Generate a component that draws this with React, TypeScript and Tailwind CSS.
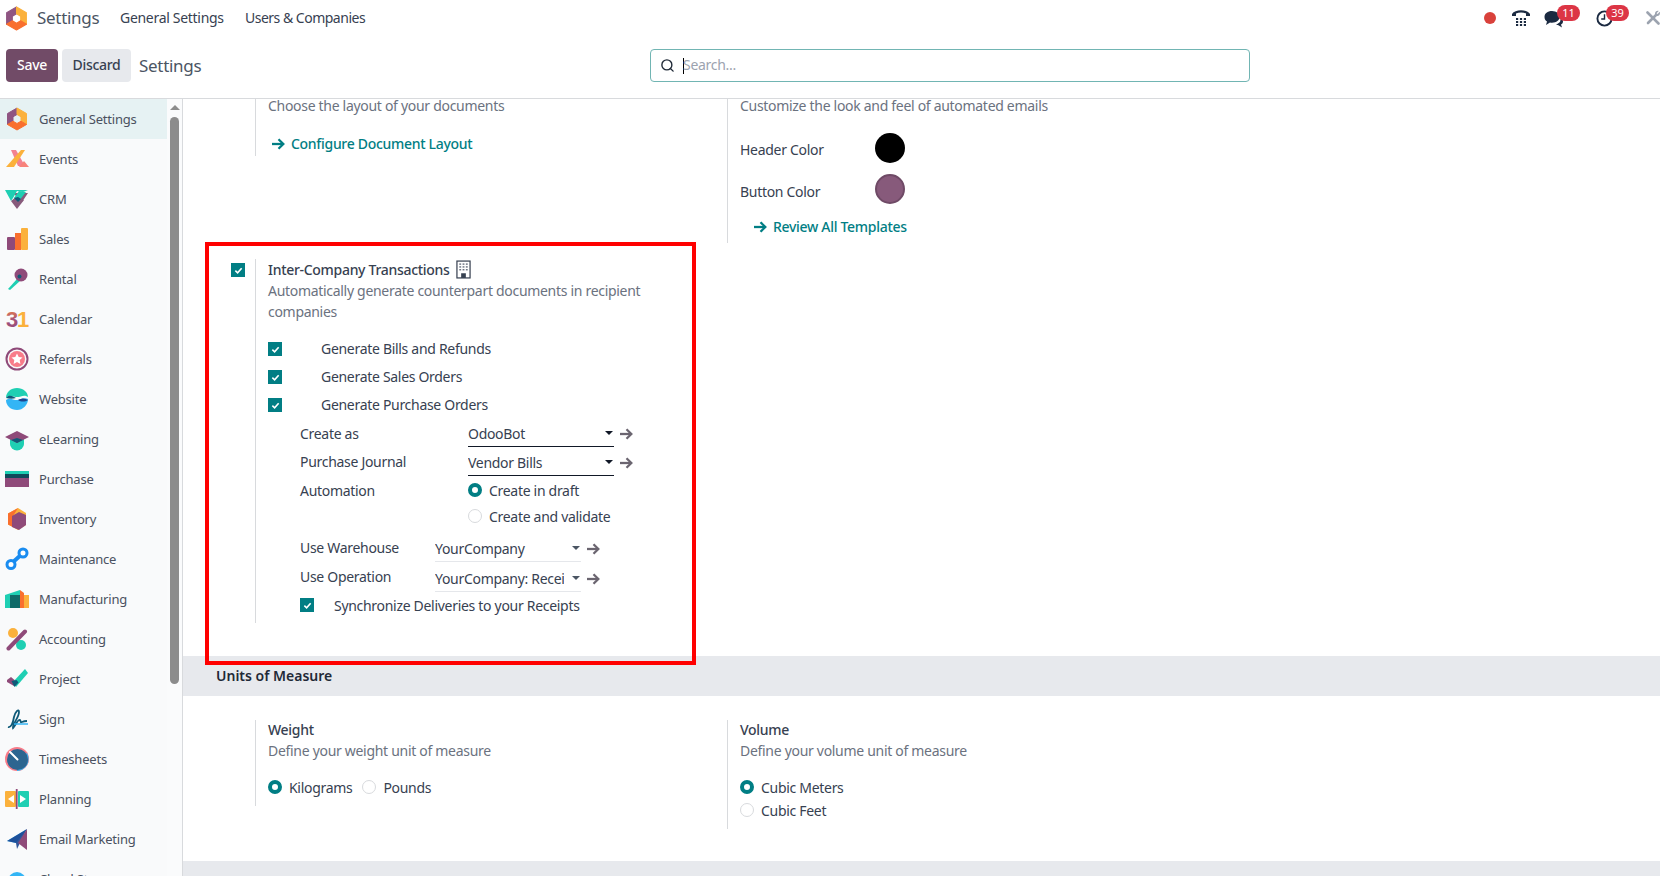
import React from "react";
import { Search } from "lucide-react";

const teal = "#017e84";

const OdooLogo = ({ className }: { className: string }) => (
  <svg viewBox="0 0 24 24" className={className} strokeLinejoin="round">
    <path d="M12 1 2.500 6.500v11l5.500-3.300V9.800L12 7.500z" fill="#8f5582" stroke="#8f5582" />
    <path d="M12 1l9.500 5.500v11L16 14.200V9.800L12 7.500z" fill="#fbb13c" stroke="#fbb13c" />
    <path d="M2.500 17.500 12 23l9.500-5.500-5.500-3.300-4 2.300-4-2.300z" fill="#f96f2e" stroke="#f96f2e" />
  </svg>
);

const AppIcon = ({ name }: { name: string }): React.JSX.Element => {
  switch (name) {
    case "settings":
      return <OdooLogo className="w-6 h-6" />;
    case "events":
      return (
        <svg viewBox="0 0 24 24" className="w-6 h-6">
          <path d="M6 3l5 0 9 16h-7z" fill="#f05a6c" opacity="0.75" />
          <path d="M16 3h4L9 20H1z" fill="#fbb13c" />
          <path d="M14 20h10l-5-6z" fill="#f8827a" />
        </svg>
      );
    case "crm":
      return (
        <svg viewBox="0 0 24 24" className="w-6 h-6">
          <path d="M8 6h15l-6 9z" fill="#875a7b" />
          <path d="M6 14l6 8 7-9-8-3z" fill="#875a7b" />
          <path d="M0 3h23l-5 2-6-1-4 7-2 3z" fill="#1fcfb3" />
          <path d="M9 11l5-7 7 1-7 9z" fill="#1fcfb3" />
          <path d="M9 11l4-1 3 2-3 3z" fill="#0f5a78" />
        </svg>
      );
    case "sales":
      return (
        <svg viewBox="0 0 24 24" className="w-6 h-6">
          <rect x="2" y="10" width="8" height="13" rx="1" fill="#8f4a79" />
          <rect x="10" y="6" width="6" height="17" fill="#f96f2e" />
          <rect x="16" y="1" width="7" height="22" rx="1" fill="#fbb13c" />
        </svg>
      );
    case "rental":
      return (
        <svg viewBox="0 0 24 24" className="w-6 h-6">
          <path d="M3 22l9-10 3 2-10 9z" fill="#1fcfb3" />
          <circle cx="16" cy="8" r="6.500" fill="#8f4a79" />
          <circle cx="14.500" cy="9.500" r="2" fill="#0f5a78" />
        </svg>
      );
    case "calendar":
      return (
        <svg viewBox="0 0 24 24" className="w-6 h-6">
          <defs>
            <linearGradient id="cal3" x1="0" y1="0" x2="0" y2="1">
              <stop offset="0" stopColor="#f98a3c" />
              <stop offset="0.5" stopColor="#a6537a" />
              <stop offset="1" stopColor="#8f4a79" />
            </linearGradient>
          </defs>
          <text x="1" y="20" fontFamily="Liberation Sans" fontWeight="700" fontSize="22" letterSpacing="0" fill="url(#cal3)">3</text>
          <text x="12" y="20" fontFamily="Liberation Sans" fontWeight="700" fontSize="22" letterSpacing="0" fill="#fbb13c">1</text>
        </svg>
      );
    case "referrals":
      return (
        <svg viewBox="0 0 24 24" className="w-6 h-6">
          <circle cx="12" cy="12" r="10.500" fill="none" stroke="#8f4a79" strokeWidth="2" />
          <circle cx="12" cy="12" r="8" fill="#f87c8a" />
          <path d="M12 6.500l1.700 3.500 3.800.5-2.800 2.600.7 3.800L12 15l-3.400 1.900.7-3.800-2.800-2.600 3.800-.5z" fill="#fff" />
        </svg>
      );
    case "website":
      return (
        <svg viewBox="0 0 24 24" className="w-6 h-6">
          <path d="M1 11C1 5 6 1 12 1s11 4 11 9c-4-3-7 0-11 0s-7-3-11 1z" fill="#1fcfb3" />
          <path d="M1 13c4-3 7 0 11 0s7-3 11-1c0 6-5 11-11 11S1 19 1 13z" fill="#33b5f5" />
          <path d="M1 11c3-4 7-2 10 0-3 1-6 1-10 0z" fill="#0f5a78" />
          <path d="M13 13c4-2 7-2 10 0-3 2-7 2-10 0z" fill="#1c4590" />
        </svg>
      );
    case "elearning":
      return (
        <svg viewBox="0 0 24 24" className="w-6 h-6">
          <path d="M5 10h14v7a7 6.500 0 0 1-14 0z" fill="#1fcfb3" />
          <path d="M0 10l12-6 12 6-12 6z" fill="#8f4a79" />
          <path d="M6 13l6-2 6 2-6 3z" fill="#0f5a78" />
        </svg>
      );
    case "purchase":
      return (
        <svg viewBox="0 0 24 24" className="w-6 h-6">
          <rect y="4" width="24" height="3" fill="#1fcfb3" />
          <rect y="7" width="24" height="4" fill="#0f4a5a" />
          <rect y="11" width="24" height="9" fill="#8f4a79" />
        </svg>
      );
    case "inventory":
      return (
        <svg viewBox="0 0 24 24" className="w-6 h-6">
          <path d="M13 1L3 6.500v11L13 23l8-5V6z" fill="#fbb13c" />
          <path d="M13 1L3 6.500v11L8 20V9z" fill="#f96f2e" />
          <path d="M7 9l7-4 7 3v10l-7 5-7-3z" fill="#8f4a79" />
        </svg>
      );
    case "maintenance":
      return (
        <svg viewBox="0 0 24 24" className="w-6 h-6">
          <path d="M7 16L17 7" stroke="#1a8cf0" strokeWidth="4" />
          <circle cx="6" cy="17.500" r="4" fill="#fff" stroke="#1a8cf0" strokeWidth="3" />
          <circle cx="18" cy="6" r="4" fill="#fff" stroke="#1a8cf0" strokeWidth="3" />
        </svg>
      );
    case "manufacturing":
      return (
        <svg viewBox="0 0 24 24" className="w-6 h-6">
          <path d="M0 8l15-5v18H0z" fill="#1fcfb3" />
          <path d="M5 8h10v13H5z" fill="#0f6a68" />
          <path d="M15 3l4 3v15h-4z" fill="#f96f2e" />
          <path d="M19 8h5v13h-5z" fill="#fbb13c" />
        </svg>
      );
    case "accounting":
      return (
        <svg viewBox="0 0 24 24" className="w-6 h-6">
          <circle cx="8" cy="6" r="5" fill="#fbb13c" />
          <circle cx="16" cy="18" r="5" fill="#1fcfb3" />
          <path d="M3.500 21.500L20 4.500" stroke="#8f4a79" strokeWidth="4" strokeLinecap="round" />
        </svg>
      );
    case "project":
      return (
        <svg viewBox="0 0 24 24" className="w-6 h-6">
          <path d="M2 13l4-3 6 5-3 4-7-4z" fill="#8f4a79" />
          <path d="M8 15L20 2l3 4-12 14z" fill="#1fcfb3" />
          <path d="M6.500 14l5-1 2 2.500L9.500 20z" fill="#0f5a78" />
        </svg>
      );
    case "sign":
      return (
        <svg viewBox="0 0 24 24" className="w-6 h-6">
          <path d="M3 20c3 1 5-4 6-10 1-5 5-9 5-5 0 6-7 12-6 16 2-2 5-9 7-8 1 1 0 3 2 2s3-1 5-1" fill="none" stroke="#0f5a78" strokeWidth="1.800" />
          <path d="M9 17h14" stroke="#33b5f5" strokeWidth="1.500" />
        </svg>
      );
    case "timesheets":
      return (
        <svg viewBox="0 0 24 24" className="w-6 h-6">
          <circle cx="12" cy="12" r="12" fill="#f87c8a" />
          <path d="M12 24a12 12 0 0 0 10-18L12 12z" fill="#33b5f5" />
          <circle cx="12.500" cy="12.500" r="10.500" fill="#2d6590" />
          <path d="M5 5l7.500 7.500" stroke="#fff" strokeWidth="2" strokeLinecap="round" />
        </svg>
      );
    case "planning":
      return (
        <svg viewBox="0 0 24 24" className="w-6 h-6">
          <rect y="4" width="11" height="16" rx="1" fill="#fbb13c" />
          <rect x="13" y="4" width="11" height="16" rx="1" fill="#1fcfb3" />
          <path d="M9 8l-6 4 6 4zM15 8l6 4-6 4z" fill="#fff" />
          <rect x="10.800" y="2" width="1.800" height="20" fill="#8f4a79" />
        </svg>
      );
    case "email":
      return (
        <svg viewBox="0 0 24 24" className="w-6 h-6">
          <path d="M2 14L22 2 11 16z" fill="#33b5f5" />
          <path d="M2 14l9 2 1 6 10-20z" fill="#1c4590" opacity="0.9" />
          <path d="M22 2l0 21-9-7z" fill="#8f4a79" />
        </svg>
      );
    default:
      return (
        <svg viewBox="0 0 24 24" className="w-6 h-6">
          <circle cx="12" cy="14" r="9" fill="#33b5f5" />
        </svg>
      );
  }
};

const apps: [string, string][] = [
  ["settings", "General Settings"],
  ["events", "Events"],
  ["crm", "CRM"],
  ["sales", "Sales"],
  ["rental", "Rental"],
  ["calendar", "Calendar"],
  ["referrals", "Referrals"],
  ["website", "Website"],
  ["elearning", "eLearning"],
  ["purchase", "Purchase"],
  ["inventory", "Inventory"],
  ["maintenance", "Maintenance"],
  ["manufacturing", "Manufacturing"],
  ["accounting", "Accounting"],
  ["project", "Project"],
  ["sign", "Sign"],
  ["timesheets", "Timesheets"],
  ["planning", "Planning"],
  ["email", "Email Marketing"],
  ["cloud", "Cloud Storage"],
];

const Check = ({ className = "" }: { className?: string }) => (
  <span className={`flex items-center justify-center w-[14px] h-[14px] bg-[#017e84] shrink-0 ${className}`}>
    <svg viewBox="0 0 10 10" className="w-[9px] h-[9px]">
      <path d="M1.500 5.200 4 7.500 8.500 2.500" fill="none" stroke="#fff" strokeWidth="1.800" />
    </svg>
  </span>
);

const Radio = ({ on = false }: { on?: boolean }) =>
  on ? (
    <span className="block w-[14px] h-[14px] rounded-full border-[4px] border-[#017e84] bg-white shrink-0" />
  ) : (
    <span className="block w-[14px] h-[14px] rounded-full border border-[#d8dadd] bg-white shrink-0" />
  );

const Arrow = ({ color = "#6b6570", className = "" }: { color?: string; className?: string }) => (
  <svg viewBox="0 0 14 12" className={`w-[14px] h-[12px] shrink-0 ${className}`} fill="none" stroke={color} strokeWidth="2.300">
    <path d="M1 6h11" />
    <path d="M7.500 1.300 12.300 6 7.500 10.700" />
  </svg>
);

const Many2One = ({ value, dark, className = "" }: { value: string; dark?: boolean; className?: string }) => (
  <div className={`flex items-center h-[26px] ${className}`}>
    <div className={`relative w-[146px] h-[26px] flex items-center border-b ${dark ? "border-[#111827]" : "border-[#e5e7eb]"}`}>
      <span className="block w-[129px] overflow-hidden whitespace-nowrap">{value}</span>
      <span className={`absolute right-[1px] top-[10px] w-0 h-0 border-x-[4px] border-x-transparent border-t-[4px] ${dark ? "border-t-[#111827]" : "border-t-[#4b5563]"}`} />
    </div>
    <Arrow className="ml-[5px]" />
  </div>
);

export default function App(): React.JSX.Element {
  return (
    <div
      className="w-[1660px] h-[876px] overflow-hidden bg-white flex flex-col text-[14px] tracking-[-0.3px] text-[#374151] relative"
      style={{ fontFamily: '"Noto Sans", "Open Sans", sans-serif' }}
    >
      {/* navbar */}
      <div className="h-[46px] flex items-start shrink-0 pt-[8px]">
        <div className="w-[37px] pl-[4px] shrink-0 -mt-[2px]">
          <OdooLogo className="w-[25px] h-[25px]" />
        </div>
        <span className="text-[17px] text-[#4b5563] w-[83px] leading-[20px]">Settings</span>
        <span className="text-[#374151] w-[125px] leading-[20px]">General Settings</span>
        <span className="text-[#374151] leading-[20px] tracking-[-0.5px]">Users &amp; Companies</span>
        <div className="ml-auto h-full relative w-[180px] shrink-0 -mt-[8px]">
          <span className="absolute left-[4px] top-[12px] w-[12px] h-[12px] rounded-full bg-[#d9413b]" />
          <svg viewBox="0 0 20 20" className="absolute left-[31px] top-[8px] w-[20px] h-[20px]">
            <path d="M1 6C4 1 16 1 19 6v2h-4V5.500C12 4 8 4 5 5.500V8H1z" fill="#1b2a41" />
            <g fill="#1b2a41">
              <rect x="5" y="10" width="2.200" height="2" /><rect x="8.900" y="10" width="2.200" height="2" /><rect x="12.800" y="10" width="2.200" height="2" />
              <rect x="5" y="13" width="2.200" height="2" /><rect x="8.900" y="13" width="2.200" height="2" /><rect x="12.800" y="13" width="2.200" height="2" />
              <rect x="5" y="16" width="2.200" height="2" /><rect x="8.900" y="16" width="2.200" height="2" /><rect x="12.800" y="16" width="2.200" height="2" />
            </g>
          </svg>
          <svg viewBox="0 0 20 18" className="absolute left-[64px] top-[10px] w-[20px] h-[18px]">
            <path d="M8 1C3.500 1 .5 3.500.5 7c0 2 1 3.500 2.500 4.500L2 15l4-2.500c.7.100 1.300.200 2 .200 4.500 0 7.500-2.500 7.500-5.700S12.500 1 8 1z" fill="#1b2a41" />
            <path d="M17 8c1.500 1 2 2.200 2 3.500 0 1.500-1 2.500-2 3l1 3-4-2.500h-2l4-3z" fill="#1b2a41" />
          </svg>
          <span className="absolute left-[77px] top-[5px] w-[23px] h-[16px] rounded-full bg-[#dc3545] text-white text-[11px] leading-[16px] text-center tracking-normal">11</span>
          <svg viewBox="0 0 18 18" className="absolute left-[116px] top-[10px] w-[17px] h-[17px]">
            <circle cx="9" cy="9" r="7.500" fill="none" stroke="#1b2a41" strokeWidth="2" />
            <path d="M9 4.500V9.500H5.500" fill="none" stroke="#1b2a41" strokeWidth="1.500" />
          </svg>
          <span className="absolute left-[126px] top-[5px] w-[23px] h-[16px] rounded-full bg-[#dc3545] text-white text-[11px] leading-[16px] text-center tracking-normal">39</span>
          <svg viewBox="0 0 16 16" className="absolute left-[165px] top-[10px] w-[16px] h-[16px]">
            <path d="M2.500 2.500 13.500 13.500" stroke="#9ca3af" strokeWidth="2.600" strokeLinecap="round" />
            <path d="M3 13 11 5" stroke="#9ca3af" strokeWidth="2.600" strokeLinecap="round" />
            <path d="M14.800 1.800 12.500 4 11.500 3.200 13.700.9C11.800.300 9.800 1.700 10 4l2 2c2 .300 3.500-1.800 2.800-4.200z" fill="#9ca3af" />
          </svg>
        </div>
      </div>

      {/* control panel */}
      <div className="h-[53px] border-b border-[#d8dadd] shrink-0 flex items-start pt-[3px] pl-[6px] relative">
        <button className="w-[52px] h-[33px] pb-[2px] bg-[#714b67] text-white rounded-[4px] font-medium">Save</button>
        <button className="w-[69px] h-[33px] pb-[2px] ml-[4px] bg-[#e7e9ed] text-[#374151] rounded-[4px] font-medium">Discard</button>
        <span className="ml-[8px] text-[17px] text-[#4b5563] leading-[33px]">Settings</span>
        <div className="absolute left-[650px] top-[3px] w-[600px] h-[33px] border border-[#71b5b3] rounded-[4px] flex items-center pl-[9px]">
          <Search size={15} strokeWidth={2.200} color="#1f2937" />
          <span className="ml-[8px] w-px h-[16px] bg-black" />
          <span className="text-[#9ca3af] ml-[-1px] pb-[2px]">Search...</span>
        </div>
      </div>

      <div className="flex flex-1 min-h-0">
        {/* sidebar */}
        <div className="w-[183px] shrink-0 border-r border-[#d8dadd] flex relative overflow-hidden">
          <div className="w-[167px] bg-[#f9fafb] shrink-0">
            {apps.map(([key, label], i) => (
              <div
                key={key}
                className={`h-[40px] flex items-center pl-[5px] text-[13px] tracking-[-0.2px] text-[#4a5160] ${i === 0 ? "bg-[#e6f2f3]" : ""}`}
              >
                <AppIcon name={key} />
                <span className="ml-[10px] pt-[2px]">{label}</span>
              </div>
            ))}
          </div>
          <div className="w-[15px] bg-[#fafbfc] relative">
            <span className="absolute left-[3px] top-[6px] w-0 h-0 border-x-[5px] border-x-transparent border-b-[5px] border-b-[#8c8c8c]" />
            <span className="absolute left-[3px] top-[18px] w-[9px] h-[567px] rounded-full bg-[#8c8c8c]" />
          </div>
        </div>

        {/* settings */}
        <div className="flex-1 min-w-0 overflow-hidden relative">
          <div className="h-[557px] flex">
            <div className="w-[472px] shrink-0 pl-[72px]">
              <div className="border-l border-[#d8dadd] pl-[12px] h-[57px]">
                <div className="text-[#6b7280] leading-[14px]">Choose the layout of your documents</div>
                <div className="mt-[20px] flex items-center text-[#017e84] font-medium">
                  <Arrow color={teal} className="ml-[3px] mr-[6px]" />
                  Configure Document Layout
                </div>
              </div>

              <div className="mt-[103px] flex -ml-[24px]">
                <div className="w-[24px] pt-[4px] shrink-0"><Check /></div>
                <div className="border-l border-[#d8dadd] pl-[12px] h-[364px] flex-1">
                  <div className="flex items-center h-[20px] font-medium text-[#374151]">
                    Inter-Company Transactions
                    <svg viewBox="0 0 16 20" className="ml-[6px] w-[15px] h-[19px]">
                      <rect x="1" y="1" width="14" height="18" fill="#fff" stroke="#374151" strokeWidth="1.300" />
                      <g fill="#6b7280">
                        <rect x="3.500" y="3.500" width="2" height="1.500" /><rect x="7" y="3.500" width="2" height="1.500" /><rect x="10.500" y="3.500" width="2" height="1.500" />
                        <rect x="3.500" y="6.500" width="2" height="1.500" /><rect x="7" y="6.500" width="2" height="1.500" /><rect x="10.500" y="6.500" width="2" height="1.500" />
                        <rect x="3.500" y="9.500" width="2" height="1.500" /><rect x="7" y="9.500" width="2" height="1.500" /><rect x="10.500" y="9.500" width="2" height="1.500" />
                      </g>
                      <rect x="5.500" y="14" width="5" height="5" fill="#374151" />
                    </svg>
                  </div>
                  <div className="mt-[1px] text-[#6b7280] leading-[21px] w-[385px]">
                    Automatically generate counterpart documents in recipient companies
                  </div>
                  <div className="mt-[17px] flex flex-col gap-[8px]">
                    {["Generate Bills and Refunds", "Generate Sales Orders", "Generate Purchase Orders"].map((t) => (
                      <div key={t} className="h-[20px] flex items-center">
                        <Check />
                        <span className="ml-[39px] pb-[2px]">{t}</span>
                      </div>
                    ))}
                  </div>
                  <div className="pl-[32px] mt-[5px]">
                    <div className="flex h-[28px]">
                      <span className="w-[168px] pt-[3px]">Create as</span>
                      <Many2One value="OdooBot" dark className="mt-[1px]" />
                    </div>
                    <div className="flex h-[29px]">
                      <span className="w-[168px] pt-[3px]">Purchase Journal</span>
                      <Many2One value="Vendor Bills" dark className="mt-[2px]" />
                    </div>
                    <div className="flex h-[26px] items-center">
                      <span className="w-[168px]">Automation</span>
                      <Radio on />
                      <span className="ml-[7px]">Create in draft</span>
                    </div>
                    <div className="flex h-[26px] items-center pl-[168px]">
                      <Radio />
                      <span className="ml-[7px]">Create and validate</span>
                    </div>
                    <div className="flex h-[30px] mt-[5px]">
                      <span className="w-[135px] pt-[3px]">Use Warehouse</span>
                      <Many2One value="YourCompany" className="mt-[2px]" />
                    </div>
                    <div className="flex h-[29px]">
                      <span className="w-[135px] pt-[2px]">Use Operation</span>
                      <Many2One value="YourCompany: Receipts" className="mt-[2px]" />
                    </div>
                    <div className="flex items-center h-[20px] mt-[2px]">
                      <Check />
                      <span className="ml-[20px]">Synchronize Deliveries to your Receipts</span>
                    </div>
                  </div>
                </div>
              </div>
            </div>

            <div className="flex-1 pl-[72px]">
              <div className="border-l border-[#d8dadd] pl-[12px] h-[144px] w-[472px]">
                <div className="text-[#6b7280] leading-[14px]">Customize the look and feel of automated emails</div>
                <div className="mt-[20px] flex items-center h-[30px]">
                  <span className="w-[135px] mt-[3px]">Header Color</span>
                  <span className="w-[30px] h-[30px] rounded-full bg-black" />
                </div>
                <div className="mt-[11px] flex items-center h-[30px]">
                  <span className="w-[135px] mt-[4px]">Button Color</span>
                  <span className="w-[30px] h-[30px] rounded-full bg-[#875a7b] border-2 border-[#6f4a66]" />
                </div>
                <div className="mt-[12px] flex items-center text-[#017e84] font-medium">
                  <Arrow color={teal} className="ml-[13px] mr-[6px]" />
                  Review All Templates
                </div>
              </div>
            </div>
          </div>

          <div className="h-[40px] bg-[#e7e9ed] flex items-center pl-[33px] pb-[2px] font-semibold tracking-normal text-[#1f2937]">Units of Measure</div>

          <div className="h-[165px] flex pt-[24px]">
            <div className="w-[472px] shrink-0 pl-[72px]">
              <div className="border-l border-[#d8dadd] pl-[12px] h-[86px]">
                <div className="font-medium text-[#374151] leading-[20px]">Weight</div>
                <div className="text-[#6b7280] leading-[20px] mt-[1px]">Define your weight unit of measure</div>
                <div className="mt-[16px] flex items-center h-[20px]">
                  <Radio on />
                  <span className="ml-[7px]">Kilograms</span>
                  <span className="ml-[10px]"><Radio /></span>
                  <span className="ml-[7px]">Pounds</span>
                </div>
              </div>
            </div>
            <div className="pl-[72px]">
              <div className="border-l border-[#d8dadd] pl-[12px] h-[109px]">
                <div className="font-medium text-[#374151] leading-[20px]">Volume</div>
                <div className="text-[#6b7280] leading-[20px] mt-[1px]">Define your volume unit of measure</div>
                <div className="mt-[16px] flex items-center h-[20px]">
                  <Radio on />
                  <span className="ml-[7px]">Cubic Meters</span>
                </div>
                <div className="mt-[3px] flex items-center h-[20px]">
                  <Radio />
                  <span className="ml-[7px]">Cubic Feet</span>
                </div>
              </div>
            </div>
          </div>

          <div className="h-[40px] bg-[#e7e9ed] flex items-center pl-[33px] font-semibold text-[#1f2937]">Emails</div>
        </div>
      </div>

      {/* red highlight drawn over the screenshot */}
      <div className="absolute left-[205px] top-[242px] w-[491px] h-[423px] border-[4px] border-[#ff0000] pointer-events-none" />
    </div>
  );
}
